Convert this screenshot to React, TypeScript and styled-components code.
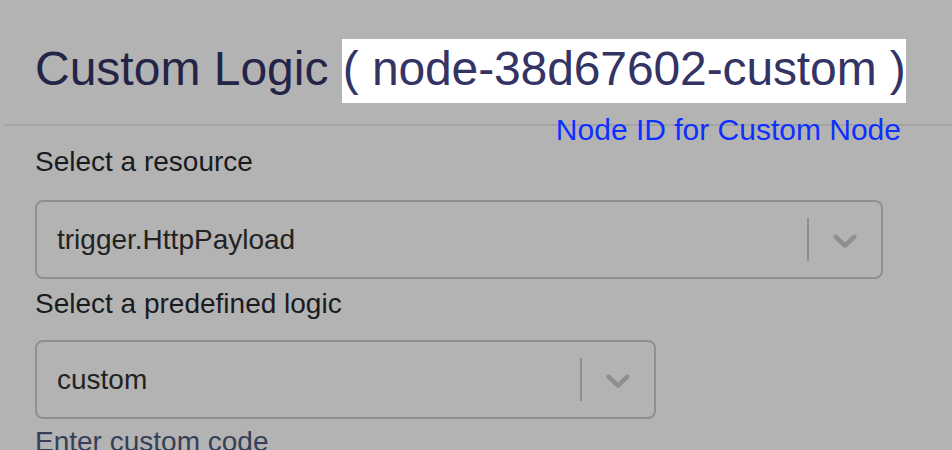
import React from "react";
import styled, { createGlobalStyle } from "styled-components";

const GlobalStyle = createGlobalStyle`
  html, body {
    margin: 0;
    padding: 0;
    background: #b3b3b3;
    font-family: "Liberation Sans", Arial, Helvetica, sans-serif;
  }
`;

const Page = styled.div`
  min-height: 100vh;
  padding-left: 4px;
  overflow: hidden;
  background: #b3b3b3;
`;

const Header = styled.div`
  position: relative;
  padding: 41px 0 27px 31px;
  border-bottom: 2px solid #a3a3a3;
`;

const Title = styled.h1`
  margin: 0;
  font-size: 48px;
  font-weight: 400;
  line-height: 56px;
  color: #242447;
  white-space: nowrap;
`;

const Highlight = styled.span`
  background: #ffffff;
  color: #333366;
  padding: 3px 0 8px 1px;
  letter-spacing: -0.12px;
`;

const Hint = styled.div`
  position: absolute;
  top: 113px;
  right: 51px;
  font-size: 30px;
  line-height: 34px;
  color: #0d30ff;
  white-space: nowrap;
`;

const Body = styled.div`
  padding: 20px 31px 0;
`;

const Label = styled.div<{ $gap: number }>`
  font-size: 28px;
  line-height: 32px;
  color: #1a1b1e;
  margin-bottom: ${(p) => p.$gap}px;
`;

const Select = styled.div<{ $width: number }>`
  display: flex;
  align-items: center;
  box-sizing: border-box;
  width: ${(p) => p.$width}px;
  height: 79px;
  border: 2px solid #8f8f8f;
  border-radius: 8px;
  margin-bottom: 9px;
`;

const Value = styled.div`
  flex: 1;
  padding: 0 16px 0 20px;
  font-size: 28px;
  color: #222222;
  white-space: nowrap;
`;

const Separator = styled.span`
  align-self: stretch;
  width: 2px;
  margin: 16px 0;
  background: #8f8f8f;
`;

const Indicator = styled.div`
  display: flex;
  padding: 16px;
  color: #8f8f8f;
`;

const Note = styled.div`
  margin-top: -2px;
  font-size: 28px;
  line-height: 32px;
  color: #363f57;
`;

const Chevron = () => (
  <svg width="40" height="40" viewBox="0 0 20 20" fill="currentColor" aria-hidden="true">
    <path d="M4.516 7.548c0.436-0.446 1.043-0.481 1.576 0l3.908 3.747 3.908-3.747c0.533-0.481 1.141-0.446 1.574 0 0.436 0.445 0.408 1.197 0 1.615-0.406 0.418-4.695 4.502-4.695 4.502-0.217 0.223-0.502 0.335-0.787 0.335s-0.57-0.112-0.789-0.335c0 0-4.287-4.084-4.695-4.502s-0.436-1.170 0-1.615z" />
  </svg>
);

const Dropdown = ({ value, width }: { value: string; width: number }) => (
  <Select $width={width}>
    <Value>{value}</Value>
    <Separator />
    <Indicator>
      <Chevron />
    </Indicator>
  </Select>
);

export default function App() {
  return (
    <Page>
      <GlobalStyle />
      <Header>
        <Title>
          Custom Logic <Highlight>( node-38d67602-custom )</Highlight>
        </Title>
        <Hint>Node ID for Custom Node</Hint>
      </Header>
      <Body>
        <Label $gap={22}>Select a resource</Label>
        <Dropdown value="trigger.HttpPayload" width={848} />
        <Label $gap={20}>Select a predefined logic</Label>
        <Dropdown value="custom" width={621} />
        <Note>Enter custom code</Note>
      </Body>
    </Page>
  );
}
